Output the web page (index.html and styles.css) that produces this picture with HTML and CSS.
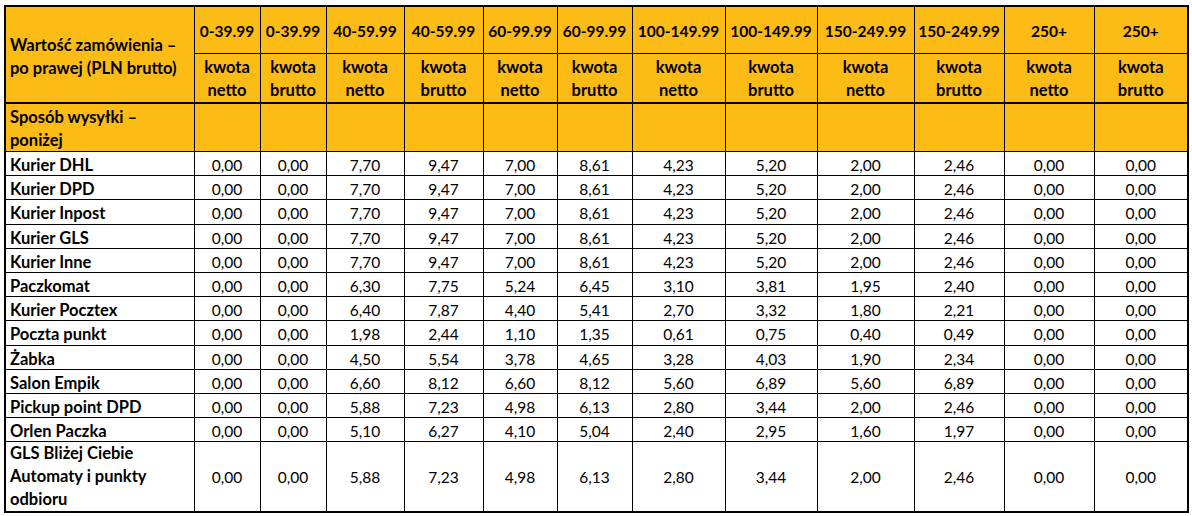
FILE: index.html
```html
<!DOCTYPE html>
<html lang="pl">
<head>
<meta charset="utf-8">
<title>Koszty wysyłki</title>
<link rel="stylesheet" href="styles.css">
</head>
<body>
<div class="sheet">
<table class="rates">
  <colgroup>
    <col class="c-label"><col class="c66"><col class="c66"><col class="c78"><col class="c79"><col class="c74"><col class="c75"><col class="c93"><col class="c92"><col class="c97"><col class="c90"><col class="c90"><col class="c94">
  </colgroup>
  <thead>
    <tr class="h1">
      <th rowspan="2" class="lbl two">Wartość zamówienia –<br>po prawej (PLN brutto)</th>
      <th>0-39.99</th><th>0-39.99</th><th>40-59.99</th><th>40-59.99</th><th>60-99.99</th><th>60-99.99</th><th>100-149.99</th><th>100-149.99</th><th>150-249.99</th><th>150-249.99</th><th>250+</th><th>250+</th>
    </tr>
    <tr class="h2">
      <th>kwota<br>netto</th><th>kwota<br>brutto</th><th>kwota<br>netto</th><th>kwota<br>brutto</th><th>kwota<br>netto</th><th>kwota<br>brutto</th><th>kwota<br>netto</th><th>kwota<br>brutto</th><th>kwota<br>netto</th><th>kwota<br>brutto</th><th>kwota<br>netto</th><th>kwota<br>brutto</th>
    </tr>
    <tr class="h3">
      <th class="lbl">Sposób wysyłki –<br>poniżej</th>
      <th></th><th></th><th></th><th></th><th></th><th></th><th></th><th></th><th></th><th></th><th></th><th></th>
    </tr>
  </thead>
  <tbody>
    <tr><th class="lbl">Kurier DHL</th><td>0,00</td><td>0,00</td><td>7,70</td><td>9,47</td><td>7,00</td><td>8,61</td><td>4,23</td><td>5,20</td><td>2,00</td><td>2,46</td><td>0,00</td><td>0,00</td></tr>
    <tr><th class="lbl">Kurier DPD</th><td>0,00</td><td>0,00</td><td>7,70</td><td>9,47</td><td>7,00</td><td>8,61</td><td>4,23</td><td>5,20</td><td>2,00</td><td>2,46</td><td>0,00</td><td>0,00</td></tr>
    <tr><th class="lbl">Kurier Inpost</th><td>0,00</td><td>0,00</td><td>7,70</td><td>9,47</td><td>7,00</td><td>8,61</td><td>4,23</td><td>5,20</td><td>2,00</td><td>2,46</td><td>0,00</td><td>0,00</td></tr>
    <tr><th class="lbl">Kurier GLS</th><td>0,00</td><td>0,00</td><td>7,70</td><td>9,47</td><td>7,00</td><td>8,61</td><td>4,23</td><td>5,20</td><td>2,00</td><td>2,46</td><td>0,00</td><td>0,00</td></tr>
    <tr><th class="lbl">Kurier Inne</th><td>0,00</td><td>0,00</td><td>7,70</td><td>9,47</td><td>7,00</td><td>8,61</td><td>4,23</td><td>5,20</td><td>2,00</td><td>2,46</td><td>0,00</td><td>0,00</td></tr>
    <tr><th class="lbl">Paczkomat</th><td>0,00</td><td>0,00</td><td>6,30</td><td>7,75</td><td>5,24</td><td>6,45</td><td>3,10</td><td>3,81</td><td>1,95</td><td>2,40</td><td>0,00</td><td>0,00</td></tr>
    <tr><th class="lbl">Kurier Pocztex</th><td>0,00</td><td>0,00</td><td>6,40</td><td>7,87</td><td>4,40</td><td>5,41</td><td>2,70</td><td>3,32</td><td>1,80</td><td>2,21</td><td>0,00</td><td>0,00</td></tr>
    <tr><th class="lbl">Poczta punkt</th><td>0,00</td><td>0,00</td><td>1,98</td><td>2,44</td><td>1,10</td><td>1,35</td><td>0,61</td><td>0,75</td><td>0,40</td><td>0,49</td><td>0,00</td><td>0,00</td></tr>
    <tr><th class="lbl">Żabka</th><td>0,00</td><td>0,00</td><td>4,50</td><td>5,54</td><td>3,78</td><td>4,65</td><td>3,28</td><td>4,03</td><td>1,90</td><td>2,34</td><td>0,00</td><td>0,00</td></tr>
    <tr><th class="lbl">Salon Empik</th><td>0,00</td><td>0,00</td><td>6,60</td><td>8,12</td><td>6,60</td><td>8,12</td><td>5,60</td><td>6,89</td><td>5,60</td><td>6,89</td><td>0,00</td><td>0,00</td></tr>
    <tr><th class="lbl">Pickup point DPD</th><td>0,00</td><td>0,00</td><td>5,88</td><td>7,23</td><td>4,98</td><td>6,13</td><td>2,80</td><td>3,44</td><td>2,00</td><td>2,46</td><td>0,00</td><td>0,00</td></tr>
    <tr><th class="lbl">Orlen Paczka</th><td>0,00</td><td>0,00</td><td>5,10</td><td>6,27</td><td>4,10</td><td>5,04</td><td>2,40</td><td>2,95</td><td>1,60</td><td>1,97</td><td>0,00</td><td>0,00</td></tr>
    <tr class="tall"><th class="lbl">GLS Bliżej Ciebie<br>Automaty i punkty<br>odbioru</th><td>0,00</td><td>0,00</td><td>5,88</td><td>7,23</td><td>4,98</td><td>6,13</td><td>2,80</td><td>3,44</td><td>2,00</td><td>2,46</td><td>0,00</td><td>0,00</td></tr>
  </tbody>
</table>
</div>
</body>
</html>
```

FILE: styles.css
```css
html, body {
  margin: 0;
  padding: 0;
  background: #ffffff;
}

body {
  font-family: Lato, "Open Sans", "Liberation Sans", sans-serif;
  color: #000;
}

.sheet {
  padding: 5px 0 0 4px;
}

.rates {
  border-collapse: collapse;
  table-layout: fixed;
  width: 1185px;
  border: 2px solid #000;
  font-size: 16.5px;
}

.c-label { width: 189px; }
.c66 { width: 66px; }
.c74 { width: 74px; }
.c75 { width: 75px; }
.c78 { width: 78px; }
.c79 { width: 79px; }
.c90 { width: 90px; }
.c92 { width: 92px; }
.c93 { width: 93px; }
.c94 { width: 94px; }
.c97 { width: 97px; }

.rates th,
.rates td {
  border: 1px solid #000;
  padding: 0;
  line-height: 23px;
  text-align: center;
  vertical-align: middle;
  white-space: nowrap;
}

.rates thead th {
  background: #fcbb15;
  font-weight: 700;
}

.rates .h1 th {
  height: 44px;
  font-size: 15.5px;
  padding-top: 2px;
}

.rates .h1 th.lbl {
  font-size: 16.5px;
  padding-top: 4px;
}

.rates .h2 th {
  height: 46px;
  padding-top: 2px;
  border-bottom: 2px solid #000;
}

.rates .h3 th {
  height: 45px;
  line-height: 22.5px;
  padding-top: 2px;
}

.rates .lbl {
  text-align: left;
  padding-left: 4px;
  font-weight: 700;
}

.rates thead .lbl.two {
  border-bottom: 2px solid #000;
}

.rates tbody td,
.rates tbody th {
  height: 20.2px;
  line-height: 20px;
  padding-top: 3px;
}

.rates tbody td {
  font-weight: 400;
  font-size: 15.5px;
}

.rates tbody th {
  background: #fff;
}

.rates tbody .tall th,
.rates tbody .tall td {
  height: 68px;
  line-height: 23px;
  padding-top: 0;
}

.rates tbody .tall td {
  padding-top: 2px;
  height: 66px;
}
```
